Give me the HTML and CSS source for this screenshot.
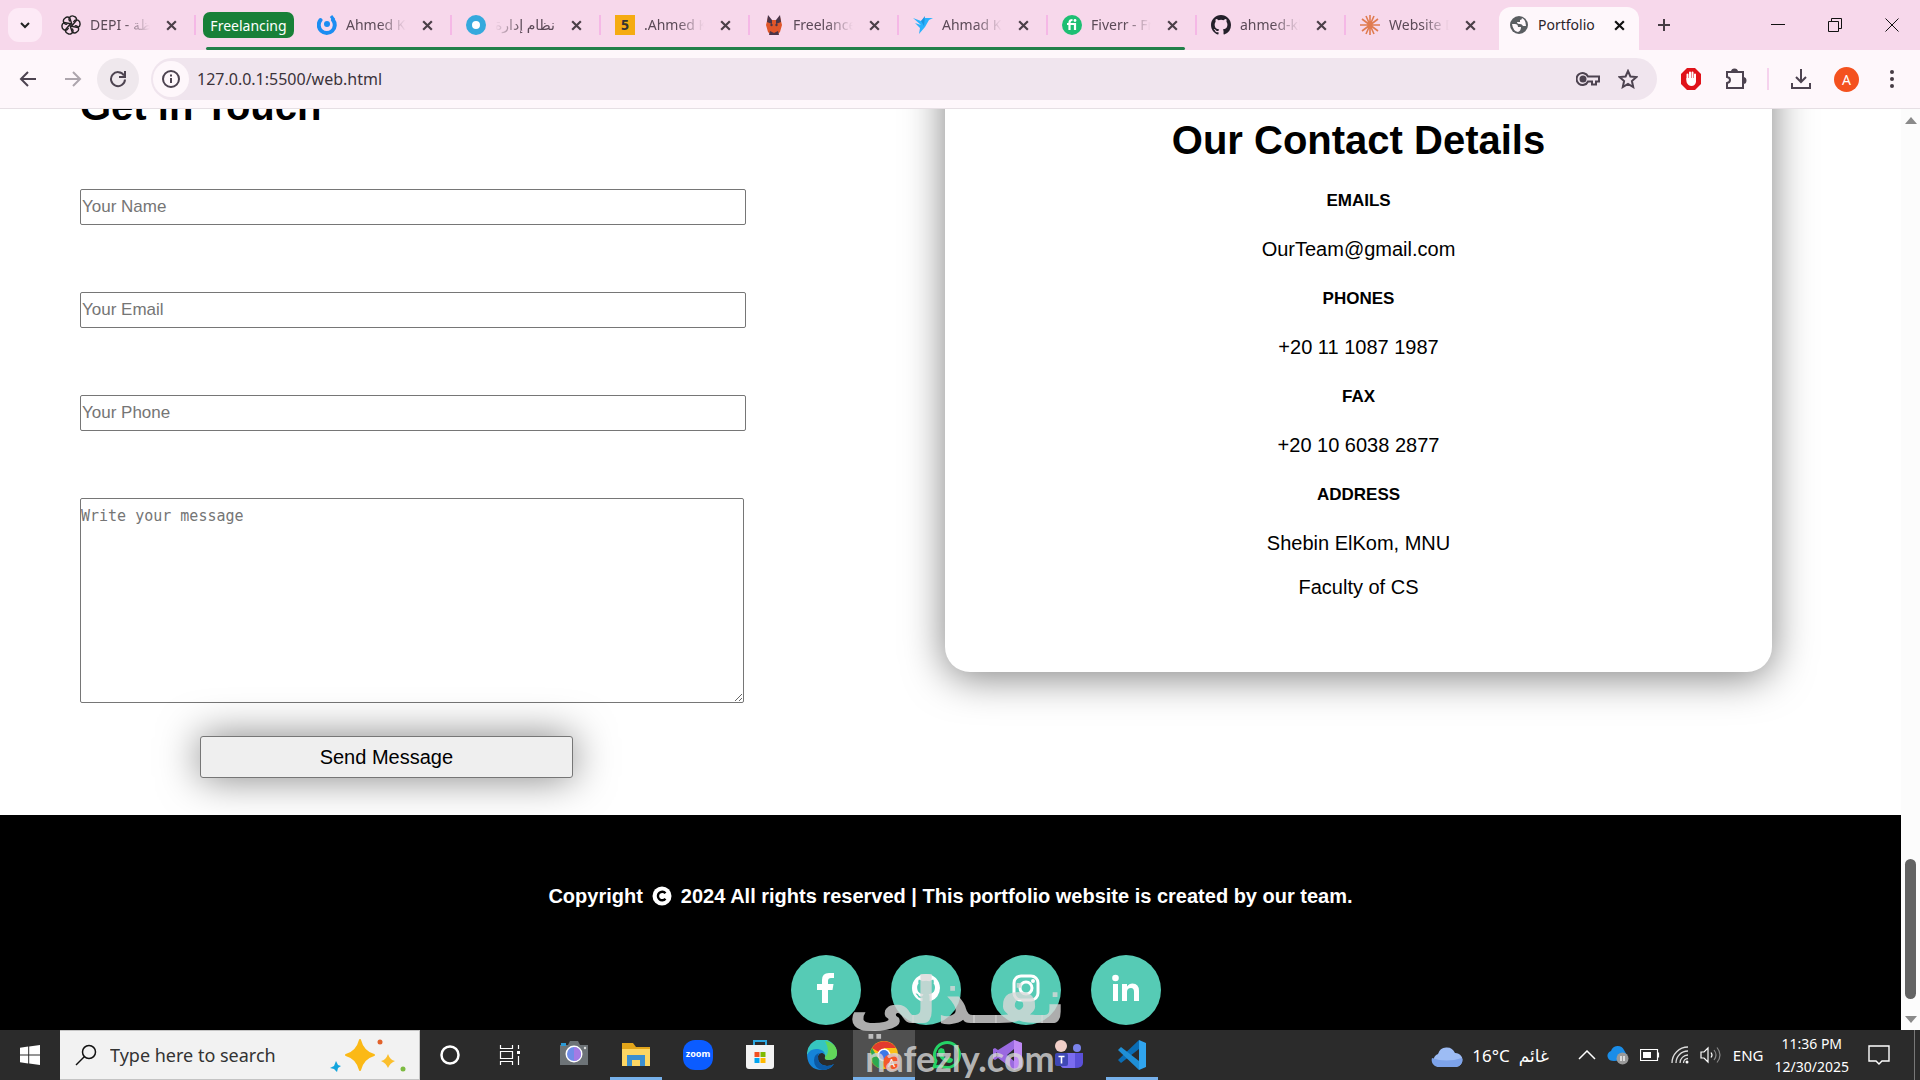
FILE: index.html
```html
<!DOCTYPE html>
<html lang="en">
<head>
<meta charset="UTF-8">
<title>Portfolio</title>
<link rel="stylesheet" href="styles.css">
</head>
<body>

<!-- tab strip -->
<div class="tabs">
	<button class="tab-search" aria-label="Search tabs"><svg width="14" height="14" viewBox="0 0 14 14"><path d="M3 5l4 4 4-4" fill="none" stroke="#222" stroke-width="2"/></svg></button>
	<div class="tab">
		<svg class="fav" viewBox="0 0 24 24"><g fill="none" stroke="#222" stroke-width="1.7"><path id="petal" d="M12 7.5V4.8A4 4 0 0 1 19 3.6a4.300 4.300 0 0 1 1 5.500L12 13.500" transform="rotate(-20 12 12)"/><use href="#petal" transform="rotate(60 12 12)"/><use href="#petal" transform="rotate(120 12 12)"/><use href="#petal" transform="rotate(180 12 12)"/><use href="#petal" transform="rotate(240 12 12)"/><use href="#petal" transform="rotate(300 12 12)"/></g></svg>
		<span class="title">DEPI - ملاحظة</span>
		<button class="close" aria-label="Close tab"><svg viewBox="0 0 12 12"><path d="M2 2l8 8M10 2l-8 8"/></svg></button>
	</div>
	<div class="group">
		<button class="chip">Freelancing</button>
		<div class="tab">
			<svg class="fav" viewBox="0 0 20 20"><path d="M3.500 5a8 8 0 1 0 12.500 0" fill="none" stroke="#1b8df2" stroke-width="4" stroke-linecap="round"/><circle cx="10" cy="9" r="3" fill="#1b8df2"/><path d="M14 1l3 4" stroke="#1b8df2" stroke-width="3"/></svg>
			<span class="title">Ahmed Khaled</span>
			<button class="close" aria-label="Close tab"><svg viewBox="0 0 12 12"><path d="M2 2l8 8M10 2l-8 8"/></svg></button>
		</div>
		<div class="tab">
			<svg class="fav" viewBox="0 0 20 20"><circle cx="10" cy="10" r="7" fill="#fff" stroke="#35a9dd" stroke-width="6"/></svg>
			<span class="title rtl" dir="rtl">نظام إدارة</span>
			<button class="close" aria-label="Close tab"><svg viewBox="0 0 12 12"><path d="M2 2l8 8M10 2l-8 8"/></svg></button>
		</div>
		<div class="tab">
			<span class="fav five">5</span>
			<span class="title">.Ahmed Khaled</span>
			<button class="close" aria-label="Close tab"><svg viewBox="0 0 12 12"><path d="M2 2l8 8M10 2l-8 8"/></svg></button>
		</div>
		<div class="tab">
			<svg class="fav" viewBox="0 0 20 20"><path d="M4 2l3 3h6l3-3 2 8-2 7-3 3H7l-3-3-2-7z" fill="#e0562a"/><path d="M4 0l4 5v4L3 7zM16 0l-4 5v4l5-2zM5 20l1-4 4 2 4-2 1 4z" fill="#4a3548"/><circle cx="7.500" cy="10" r="1.200" fill="#4a3548"/><circle cx="12.500" cy="10" r="1.200" fill="#4a3548"/></svg>
			<span class="title">Freelancer</span>
			<button class="close" aria-label="Close tab"><svg viewBox="0 0 12 12"><path d="M2 2l8 8M10 2l-8 8"/></svg></button>
		</div>
		<div class="tab">
			<svg class="fav" viewBox="0 0 20 20"><path d="M0 3l8 3 4-3 8 0-4 2-4 7-6 7 1-6-5-5 6 2z" fill="#29b2fe"/><path d="M8 6l4-5-1 10z" fill="#1b95e0"/></svg>
			<span class="title">Ahmad Khaled</span>
			<button class="close" aria-label="Close tab"><svg viewBox="0 0 12 12"><path d="M2 2l8 8M10 2l-8 8"/></svg></button>
		</div>
		<div class="tab last">
			<svg class="fav" viewBox="0 0 20 20"><circle cx="10" cy="10" r="10" fill="#1dbf73"/><path d="M7.500 15V7.500q0-2.500 3-2.500M5 9h8v6" fill="none" stroke="#fff" stroke-width="2.200"/><circle cx="13" cy="5.500" r="1.400" fill="#fff"/></svg>
			<span class="title">Fiverr - Freelance</span>
			<button class="close" aria-label="Close tab"><svg viewBox="0 0 12 12"><path d="M2 2l8 8M10 2l-8 8"/></svg></button>
		</div>
	</div>
	<div class="tab">
		<svg class="fav" viewBox="0 0 16 16"><path fill="#24202a" d="M8 0C3.580 0 0 3.580 0 8c0 3.540 2.290 6.530 5.470 7.590.4.07.55-.17.55-.38v-1.490c-2.010.37-2.530-.49-2.690-.94-.09-.23-.48-.94-.82-1.130-.28-.15-.68-.52-.01-.53.63-.01 1.080.58 1.230.82.72 1.210 1.870.87 2.330.66.07-.52.28-.87.51-1.070-1.780-.2-3.640-.89-3.640-3.950 0-.87.31-1.590.82-2.150-.08-.2-.36-1.020.08-2.120 0 0 .67-.21 2.200.82a7.600 7.600 0 0 1 4 0c1.530-1.040 2.200-.82 2.200-.82.44 1.100.16 1.920.08 2.120.51.56.82 1.270.82 2.150 0 3.070-1.870 3.750-3.650 3.950.29.25.54.73.54 1.480v2.200c0 .21.15.46.55.38A8 8 0 0 0 16 8c0-4.420-3.580-8-8-8z"/></svg>
		<span class="title">ahmed-khaled</span>
		<button class="close" aria-label="Close tab"><svg viewBox="0 0 12 12"><path d="M2 2l8 8M10 2l-8 8"/></svg></button>
	</div>
	<div class="tab last">
		<svg class="fav" viewBox="0 0 20 20"><path d="M10 0v20M0 10h20M2 4l16 12M18 4L2 16M6 1l8 18M14 1L6 19" stroke="#e07b4f" stroke-width="1.600"/></svg>
		<span class="title">Website Dev</span>
		<button class="close" aria-label="Close tab"><svg viewBox="0 0 12 12"><path d="M2 2l8 8M10 2l-8 8"/></svg></button>
	</div>
	<div class="tab active">
		<svg class="fav" viewBox="0 0 20 20"><circle cx="10" cy="10" r="9" fill="#5a5d61"/><path d="M3 9h3q3 0 3 3h3q0 4-3 5-5-1-6-8zM9 3h4q0 2-2 2v2H8q0 2 3 2 2 0 3 2h3q0-6-4-8z" fill="#fef7fb"/></svg>
		<span class="title">Portfolio</span>
		<button class="close" aria-label="Close tab"><svg viewBox="0 0 12 12"><path d="M2 2l8 8M10 2l-8 8"/></svg></button>
	</div>
	<button class="new-tab" aria-label="New tab"><svg width="14" height="14" viewBox="0 0 14 14"><path d="M7 1v12M1 7h12" stroke="#463c44" stroke-width="2"/></svg></button>
	<div class="win">
		<button aria-label="Minimize"><svg width="14" height="14" viewBox="0 0 14 14"><path d="M0 6.500h14"/></svg></button>
		<button aria-label="Restore"><svg width="14" height="14" viewBox="0 0 14 14"><path d="M.5 3.500h10v10H.5zM3.500 3V.5h10v10H11"/></svg></button>
		<button aria-label="Close"><svg width="14" height="14" viewBox="0 0 14 14"><path d="M.5.5l13 13M13.500.5l-13 13"/></svg></button>
	</div>
</div>

<!-- toolbar -->
<div class="toolbar">
	<button aria-label="Back"><svg width="18" height="18" viewBox="0 0 18 18"><path d="M17 9H3M9 2L2 9l7 7"/></svg></button>
	<button aria-label="Forward" class="off"><svg width="18" height="18" viewBox="0 0 18 18"><path d="M1 9h14M9 2l7 7-7 7"/></svg></button>
	<button aria-label="Reload" class="reload"><svg width="18" height="18" viewBox="0 0 18 18"><path d="M15 5.500A7 7 0 1 0 16 9.500M16 1v6h-6"/></svg></button>
	<div class="omnibox">
		<button class="info" aria-label="Site information"><svg width="18" height="18" viewBox="0 0 18 18"><circle cx="9" cy="9" r="8"/><path d="M9 8v5M9 4.500v2"/></svg></button>
		<input type="text" value="127.0.0.1:5500/web.html" aria-label="Address">
		<button aria-label="Passwords"><svg width="24" height="18" viewBox="0 0 24 18"><path d="M12 6.500A6 6 0 1 0 12 11.500h4v3h4v-3h3v-5z"/><circle cx="7" cy="9" r="2.500" fill="#4d4350" stroke="none"/></svg></button>
		<button aria-label="Bookmark"><svg width="20" height="20" viewBox="0 0 20 20"><path d="M10 2l2.400 5.500 6 .5-4.500 4 1.300 6-5.200-3.200L4.800 18l1.300-6L1.600 8l6-.5z"/></svg></button>
	</div>
	<button aria-label="Ad blocker"><svg width="22" height="22" viewBox="0 0 22 22"><path d="M7 0h8l6 6v10l-6 6H7l-6-6V6z" fill="#e0131a" stroke="none"/><path d="M7.500 12V6.500M10 11V4.500M12.500 11V4.500M15 12V6.500" stroke="#fff" stroke-linecap="round"/><path d="M6.500 10H16v4q-1 4-4.500 4t-5-4z" fill="#fff" stroke="none"/></svg></button>
	<button aria-label="Extensions"><svg width="22" height="22" viewBox="0 0 22 22"><path d="M2 4h5a2.500 2.500 0 0 1 5 0h6v6a2.500 2.500 0 0 1 0 5v5H2v-5q3-.5 3-3T2 9z"/><path d="M7.500 4a2 2 0 0 1 4 0zM18 10.500a2 2 0 0 1 0 4z" fill="#4d4350"/></svg></button>
	<i class="bar"></i>
	<button aria-label="Downloads"><svg width="22" height="22" viewBox="0 0 22 22"><path d="M11 1v13M6 9l5 5 5-5M2 15v5h18v-5"/></svg></button>
	<button class="avatar" aria-label="Profile">A</button>
	<button aria-label="Menu"><svg width="4" height="20" viewBox="0 0 4 20"><g fill="#463c44" stroke="none"><circle cx="2" cy="3" r="2"/><circle cx="2" cy="10" r="2"/><circle cx="2" cy="17" r="2"/></g></svg></button>
</div>

<!-- page -->
<div class="view">
	<div class="page">
		<div class="scrolled">
			<section class="contact">
				<form class="form">
					<h1>Get in Touch</h1>
					<input type="text" placeholder="Your Name" aria-label="Your Name">
					<input type="email" placeholder="Your Email" aria-label="Your Email">
					<input type="tel" placeholder="Your Phone" aria-label="Your Phone">
					<textarea placeholder="Write your message" aria-label="Write your message"></textarea>
					<button type="button">Send Message</button>
				</form>
				<div class="card">
					<h1>Our Contact Details</h1>
					<h5>EMAILS</h5>
					<p>OurTeam@gmail.com</p>
					<h5>PHONES</h5>
					<p>+20 11 1087 1987</p>
					<h5>FAX</h5>
					<p>+20 10 6038 2877</p>
					<h5>ADDRESS</h5>
					<p>Shebin ElKom, MNU</p>
					<p>Faculty of CS</p>
				</div>
			</section>
			<footer>
				<p>Copyright <svg width="20" height="20" viewBox="0 0 20 20"><circle cx="10" cy="10" r="9.500" fill="#fff"/><path d="M13.500 7.200a4.300 4.300 0 1 0 0 5.600" fill="none" stroke="#000" stroke-width="2.400"/></svg> 2024 All rights reserved | This portfolio website is created by our team.</p>
				<ul>
					<li><a href="#" aria-label="Facebook"><svg width="20" height="32" viewBox="0 0 20 32"><path fill="#fff" d="M6 31V18H1v-6h5V8q0-7 7-7h5v5h-3q-3 0-3 3v3h5.500l-1 6H12v13z"/></svg></a></li>
					<li><a href="#" aria-label="GitHub"><svg width="28" height="28" viewBox="0 0 16 16"><path fill="#fff" d="M8 0C3.580 0 0 3.580 0 8c0 3.540 2.290 6.530 5.470 7.590.4.07.55-.17.55-.38v-1.490c-2.010.37-2.530-.49-2.690-.94-.09-.23-.48-.94-.82-1.130-.28-.15-.68-.52-.01-.53.63-.01 1.080.58 1.230.82.72 1.210 1.870.87 2.330.66.07-.52.28-.87.51-1.070-1.780-.2-3.640-.89-3.640-3.950 0-.87.31-1.590.82-2.150-.08-.2-.36-1.020.08-2.120 0 0 .67-.21 2.200.82a7.600 7.600 0 0 1 4 0c1.530-1.040 2.200-.82 2.200-.82.44 1.100.16 1.920.08 2.120.51.56.82 1.270.82 2.150 0 3.070-1.870 3.750-3.650 3.950.29.25.54.73.54 1.480v2.200c0 .21.15.46.55.38A8 8 0 0 0 16 8c0-4.420-3.580-8-8-8z"/></svg></a></li>
					<li><a href="#" aria-label="Instagram"><svg width="28" height="28" viewBox="0 0 28 28"><rect x="2" y="2" width="24" height="24" rx="7" fill="none" stroke="#fff" stroke-width="3"/><circle cx="14" cy="14" r="6" fill="none" stroke="#fff" stroke-width="3"/><circle cx="21" cy="7" r="2" fill="#fff"/></svg></a></li>
					<li><a href="#" aria-label="LinkedIn"><svg width="28" height="28" viewBox="0 0 28 28"><path fill="#fff" d="M1 10h5v17H1zM10 10h5v2.500q2-3 5.500-3 6.500 0 6.500 7.500v10h-5v-9q0-4-3-4-4 0-4 4v9h-5z"/><circle cx="3.500" cy="4" r="3.300" fill="#fff"/></svg></a></li>
				</ul>
			</footer>
		</div>
	</div>
	<div class="scrollbar"><i class="up"></i><i class="thumb"></i><i class="down"></i></div>
</div>

<!-- taskbar -->
<div class="taskbar">
	<button class="start" aria-label="Start"><svg width="20" height="20" viewBox="0 0 20 20"><path fill="#fff" d="M0 2.800L8.200 1.600v7.900H0zM9.200 1.500L20 0v9.500H9.200zM0 10.500h8.200v7.900L0 17.200zM9.200 10.500H20V20L9.200 18.500z"/></svg></button>
	<div class="search">
		<svg width="22" height="22" viewBox="0 0 22 22"><circle cx="14" cy="8" r="6.500" fill="none" stroke="#111" stroke-width="1.500"/><path d="M9.500 12.500L1 21" stroke="#111" stroke-width="1.500"/></svg>
		<input type="text" placeholder="Type here to search" aria-label="Search">
		<svg width="78" height="34" viewBox="0 0 78 34"><path d="M30 2q3 12 14 15-11 3-14 15-3-12-14-15 11-3 14-15z" fill="#fbb916" stroke="#fbb916" stroke-width="2" stroke-linejoin="round"/><path d="M58 16q2 6 7 7-5 2-7 7-2-5-7-7 5-1 7-7z" fill="#fbbf2d"/><path d="M6 23l2 4 3 1-3 2-1 4-3-3-4-1 4-2z" fill="#12a5dd"/><circle cx="50" cy="4" r="2.500" fill="#e2622b"/><circle cx="73" cy="31" r="2.500" fill="#7dbb42"/></svg>
	</div>
	<button class="sys" aria-label="Cortana"><svg width="22" height="22" viewBox="0 0 22 22"><circle cx="11" cy="11" r="8.500" fill="none" stroke="#fff" stroke-width="2.500"/></svg></button>
	<button class="sys" aria-label="Task view"><svg width="22" height="20" viewBox="0 0 22 20"><path d="M1.500 0v3.500h12V0M1.500 6.500h12v7h-12zM1.500 20v-3.500h12V20M19.500 0v4M19.500 11v9" fill="none" stroke="#fff" stroke-width="1.200"/><path d="M18 6h3v3h-3z" fill="#fff"/></svg></button>
	<div class="apps">
		<button aria-label="Camera"><svg width="30" height="30" viewBox="0 0 30 30"><path d="M1 5h8l2-4h8l2 4h8v20H1z" fill="#6d7377"/><path d="M2 3h5v3H2z" fill="#2b9ad6"/><circle cx="15" cy="14" r="8.500" fill="#fff"/><circle cx="15" cy="14" r="7" fill="#6f8de8"/><path d="M15 7a7 7 0 0 1 0 14z" fill="#a47be4"/><circle cx="26" cy="8" r="1.200" fill="#ddd"/></svg></button>
		<button aria-label="File Explorer" class="open"><svg width="30" height="28" viewBox="0 0 30 28"><path d="M1 2h11l3 4h14v19H1z" fill="#e2a51a"/><path d="M1 8h28v17H1z" fill="#fdd663"/><path d="M6 25V14h18v11h-5v-6h-8v6z" fill="#3c8fd0"/></svg></button>
		<button aria-label="Zoom"><span class="zoom">zoom</span></button>
		<button aria-label="Store"><svg width="30" height="30" viewBox="0 0 30 30"><path d="M9 7V1h12v6" fill="none" stroke="#2da7e0" stroke-width="2"/><path d="M1 5h28v21q0 3-3 3H4q-3 0-3-3z" fill="#f3f3f3"/><path d="M9.500 12h5v5h-5z" fill="#f25022"/><path d="M15.500 12h5v5h-5z" fill="#7fba00"/><path d="M9.500 18h5v5h-5z" fill="#00a4ef"/><path d="M15.500 18h5v5h-5z" fill="#ffb900"/></svg></button>
		<button aria-label="Edge"><svg width="30" height="30" viewBox="0 0 30 30"><path d="M0 15A15 15 0 0 1 30 13q0 7-8 7-5 0-4-3 1-2-2-4-8-3-16 2z" fill="#36c6c0"/><path d="M18 1q12 2 12 12 0 7-8 7-5 0-4-3 6-5 0-16z" fill="#62d65a"/><path d="M0 15q3-7 11-6 6 1 7 5-5-3-7 2-1 9 9 10 4 0 7-2-4 6-12 6Q1 30 0 15z" fill="#1584d8"/><path d="M11 16q-1 9 9 10 4 0 7-2-4 6-12 6Q7 28 7 20q0-6 6-7-2 1-2 3z" fill="#0c59a4"/></svg></button>
		<button aria-label="Chrome" class="open current"><svg width="30" height="30" viewBox="0 0 30 30"><circle cx="15" cy="15" r="14" fill="#fbc116"/><path d="M15 15L3 8A14 14 0 0 1 27 8H15z" fill="#e33b2e"/><path d="M15 15l-1 14A14 14 0 0 1 3 8l6 10z" fill="#2da94f"/><circle cx="15" cy="15" r="6.500" fill="#fff"/><circle cx="15" cy="15" r="5" fill="#3b78e7"/></svg><span class="badge">A</span></button>
		<button aria-label="WhatsApp"><svg width="30" height="30" viewBox="0 0 30 30"><path d="M3 27l2-6A12.500 12.500 0 1 1 10 26z" fill="#2b2b2b" stroke="#25d366" stroke-width="3"/><path d="M10 8l3 1 1 4-2 2q1 3 4 4l2-2 4 2q0 4-4 4-10-2-11-11 0-3 3-4z" fill="#25d366"/></svg></button>
		<button aria-label="Visual Studio"><svg width="30" height="30" viewBox="0 0 30 30"><path d="M21 0l8 3v24l-8 3L5 18l-3 2-2-1V9l2-1 3 2z" fill="#9a6ae0"/><path d="M21 0l8 3v24l-8 3z" fill="#c08af5"/><path d="M21 9v12l-7-6zM3 12v5l3-2z" fill="#2b2b2b"/></svg></button>
		<button aria-label="Teams"><svg width="30" height="30" viewBox="0 0 30 30"><circle cx="22" cy="8" r="4" fill="#7b83eb"/><path d="M15 13h13v10q0 5-8 5z" fill="#5b50d8"/><path d="M5 13h15v15H9q-4 0-4-6z" fill="#7b6cf0"/><rect y="13" width="13" height="13" rx="2" fill="#4048b5"/><path d="M3.500 16.500h6M6.500 16.500v7" stroke="#fff" stroke-width="1.600"/><circle cx="6" cy="6" r="6" fill="#f1cfc8"/></svg></button>
		<button aria-label="VS Code" class="open"><svg width="30" height="30" viewBox="0 0 30 30"><path d="M22 0v9L4 23l-3-3z" fill="#0a6db5"/><path d="M22 30v-9L4 7l-3 3z" fill="#1f8fd6"/><path d="M22 0l7 3v24l-7 3z" fill="#30a4ee"/></svg></button>
	</div>
	<div class="tray">
		<div class="weather">
			<svg width="32" height="24" viewBox="0 0 32 24"><path d="M7 24a7 7 0 0 1 0-13 9 9 0 0 1 17-1 7 7 0 0 1 1 14z" fill="#9dbcf4"/><path d="M7 24a7 7 0 0 1-6-9q14 5 30 0a7 7 0 0 1-6 9z" fill="#7da3ea"/></svg>
			<span>16°C</span><span dir="rtl">غائم</span>
		</div>
		<svg class="more" width="18" height="10" viewBox="0 0 18 10"><path d="M1 9l8-8 8 8" fill="none" stroke="#fff" stroke-width="1.500"/></svg>
		<svg width="22" height="22" viewBox="0 0 22 22"><path d="M1 14a5 5 0 0 1 3-7 7 7 0 0 1 13-1q3 4 3 8-8 3-13 3-5 0-6-3z" fill="#1a8de8"/><circle cx="15.500" cy="14.500" r="6" fill="#9a9a9a"/><path d="M14 12v5M17 12v5" stroke="#fff" stroke-width="1.300"/></svg>
		<svg width="20" height="12" viewBox="0 0 20 12"><path d="M.5.5h17v11H.5zM18.500 3.500v5" fill="none" stroke="#fff" stroke-width="1.200"/><path d="M3 3h8v6H3z" fill="#fff"/></svg>
		<svg width="18" height="18" viewBox="0 0 18 18"><path d="M1 17A16 16 0 0 1 17 1M5 17A12 12 0 0 1 17 5M9 17a8 8 0 0 1 8-8M12.500 17a4.500 4.500 0 0 1 4.500-4.500" fill="none" stroke="#ddd" stroke-width="1.300"/><circle cx="16" cy="16" r="1.500" fill="#fff"/></svg>
		<svg width="22" height="18" viewBox="0 0 22 18"><path d="M1 6h3l4-4v14l-4-4H1zM11 6.500q2 2.500 0 5" fill="none" stroke="#fff" stroke-width="1.200"/><path d="M14 4q4 5 0 10M17 1.500q6 7.500 0 15" fill="none" stroke="#888" stroke-width="1.200"/></svg>
		<span class="lang">ENG</span>
		<div class="clock">11:36 PM<br>12/30/2025</div>
		<svg width="22" height="22" viewBox="0 0 22 22"><path d="M1 2h20v15h-7l-3 3-3-3H1z" fill="none" stroke="#fff" stroke-width="1.400"/></svg>
	</div>
	<i class="desktop"></i>
</div>

<div class="watermark"><div class="ar" dir="rtl">نفـذلي</div><div class="en">nafezly.com</div></div>

</body>
</html>
```
FILE: styles.css
```css
* { box-sizing: border-box; }
body { margin: 0; height: 100vh; display: flex; flex-direction: column; overflow: hidden; background: #fff; font-family: "Liberation Sans", Arial, sans-serif; }
button { padding: 0; border: 0; background: none; display: flex; align-items: center; justify-content: center; flex: none; }
svg { flex: none; display: block; }
input { min-width: 0; }

/* tab strip */
.tabs { display: flex; height: 50px; flex: none; background: #f7d8eb; padding-left: 8px; font: 15px "Noto Sans", "DejaVu Sans", sans-serif; color: #5b4a57; }
.tab-search { width: 34px; height: 34px; margin: 8px 4px 0 0; border-radius: 11px; background: #fdeaf6; }
.tab { position: relative; display: flex; align-items: center; width: 149px; height: 50px; padding-left: 15px; flex: none; }
.tab::after { content: ""; position: absolute; right: -1px; top: 15px; width: 2px; height: 20px; background: #f5b8e6; }
.tab.last::after, .tab.active::after { display: none; }
.group .tab.last::after { display: block; }
.fav { width: 20px; height: 20px; flex: none; }
.five { background: #f5ab12; color: #333; font-size: 14px; font-weight: bold; line-height: 20px; text-align: center; }
.title { width: 60px; margin-left: 9px; overflow: hidden; white-space: nowrap; font-size: 14px; line-height: 24px; -webkit-mask-image: linear-gradient(to right, #000 55%, transparent); mask-image: linear-gradient(to right, #000 55%, transparent); }
.title.rtl { -webkit-mask-image: linear-gradient(to left, #000 55%, transparent); mask-image: linear-gradient(to left, #000 55%, transparent); }
.close { width: 20px; height: 20px; margin-left: 11px; }
.close svg { width: 13px; height: 13px; }
.close path { stroke: #4b3f48; stroke-width: 2; }
.group { display: flex; position: relative; }
.group::after { content: ""; position: absolute; left: 11px; right: 11px; bottom: 0; height: 3px; border-radius: 2px; background: #218049; }
.chip { width: 91px; height: 26px; margin: 12px 8px 0; border-radius: 7px; background: #188038; color: #fff; font: 14px "Noto Sans", sans-serif; }
.tab.active { color: #2b2329; }
.tab.active::before { content: ""; position: absolute; left: 5px; right: 4px; top: 7px; bottom: 0; border-radius: 12px 12px 0 0; background: #fef7fb; }
.tab.active > * { position: relative; }
.tab.active .title { -webkit-mask-image: none; mask-image: none; }
.tab.active .close path { stroke: #111; }
.new-tab { width: 42px; }
.win { display: flex; margin-left: auto; }
.win button { width: 57px; }
.win path { fill: none; stroke: #111; }

/* toolbar */
.toolbar { display: flex; align-items: center; height: 59px; flex: none; padding: 0 6px 0 5px; background: #fef7fb; border-bottom: 1px solid #e6dfe4; }
.toolbar button { width: 45px; height: 42px; }
.toolbar path, .toolbar circle { fill: none; stroke: #4d4350; stroke-width: 2; }
.toolbar [fill="#4d4350"] { fill: #4d4350; }
.toolbar [fill="#fff"] { fill: #fff; stroke: none; }
.toolbar [stroke="#fff"] { stroke: #fff; }
.toolbar [fill="#e0131a"] { fill: #e0131a; stroke: none; }
.toolbar [fill="#463c44"] circle { fill: #463c44; stroke: none; }
.toolbar .off { opacity: .45; }
.toolbar .reload { width: 42px; border-radius: 50%; background: #efe8ed; margin-left: 2px; }
.omnibox { flex: 1; display: flex; align-items: center; height: 42px; margin: 0 11px 0 12px; padding: 0 9px 0 2px; border-radius: 21px; background: #f0e5ee; }
.omnibox input { flex: 1; border: 0; padding: 0 0 0 8px; background: none; color: #3b333a; font: 16px "Noto Sans", sans-serif; }
.toolbar .omnibox button { width: 40px; }
.toolbar .omnibox .info { width: 36px; height: 36px; border-radius: 50%; background: #fef7fb; }
.bar { width: 2px; height: 22px; margin: 0 9px; background: #f6d3ee; }
.toolbar .avatar { width: 25px; height: 25px; margin: 0 10px 0 11px; border-radius: 50%; background: #f4511e; color: #fff; font: 14px "Noto Sans", sans-serif; }

/* page */
.view { flex: 1; display: flex; min-height: 0; }
.page { flex: 1; overflow: hidden; }
.scrolled { margin-top: -60px; }
.contact { display: grid; grid-template-columns: 666fr 827fr; column-gap: 199px; align-items: start; padding: 0 129px 37px 80px; }
h1 { margin: 0; font-size: 40px; line-height: 46px; }
.form { display: flex; flex-direction: column; padding-top: 34px; }
.form h1 { margin-bottom: 60px; }
.form input { height: 36px; margin-bottom: 67px; padding: 0 1px; border: 1px solid #767676; border-radius: 2px; font: 17px "Liberation Sans", Arial, sans-serif; }
.form textarea { width: 664px; max-width: 100%; height: 205px; padding: 8px 0; border: 1px solid #767676; border-radius: 2px; font: 15px "DejaVu Sans Mono", monospace; }
::placeholder { color: #757575; }
.form button { width: 56%; height: 42px; margin: 33px 0 0 18%; border: 1px solid #767676; border-radius: 3px; background: #efefef; box-shadow: 0 0 40px rgba(0,0,0,.5); color: #000; font: 20px "Liberation Sans", Arial, sans-serif; }
.card { padding: 68px 20px 73px; border-radius: 25px; box-shadow: 0 5px 40px rgba(0,0,0,.5); text-align: center; }
.card h1 { margin-bottom: 28px; }
.card h5 { margin: 28px 0 26px; font-size: 17px; line-height: 20px; }
.card p { margin: 0; font-size: 20px; line-height: 24px; }
.card p + p { margin-top: 20px; }
footer { padding: 69px 0 60px; background: #000; color: #fff; }
footer p { display: flex; align-items: center; justify-content: center; gap: 9px; margin: 0; font-size: 20px; font-weight: bold; line-height: 24px; }
footer ul { display: flex; justify-content: center; gap: 30px; margin: 47px 0 0; padding: 0 0 0 50px; list-style: none; }
footer a { display: flex; align-items: center; justify-content: center; width: 70px; height: 70px; padding-bottom: 4px; border-radius: 50%; background: #56cbb5; }
.scrollbar { width: 19px; display: flex; flex-direction: column; align-items: center; background: #fcfcfc; padding: 8px 0 7px; }
.up, .down { border: 6px solid transparent; }
.up { border-top: 0; border-bottom: 7px solid #8a8a8a; }
.down { border-bottom: 0; border-top: 7px solid #8a8a8a; }
.thumb { width: 11px; height: 140px; margin: auto 0 17px; border-radius: 6px; background: #636363; }

/* taskbar */
.taskbar { display: flex; height: 50px; flex: none; background: #2b2b2b; color: #fff; font: 18px "Noto Sans", "DejaVu Sans", sans-serif; }
.start, .sys { width: 60px; }
.search { display: flex; align-items: center; width: 360px; padding: 0 11px 0 15px; background: #f2f2f2; border: 1px solid #c4c4c4; border-left: 0; }
.search input { flex: 1; padding: 0 0 0 13px; border: 0; background: none; font: 18px "Noto Sans", sans-serif; }
.search ::placeholder { color: #333; }
.apps { display: flex; margin-left: 3px; }
.apps button { position: relative; width: 62px; }
.apps .current { background: #505050; }
.open::after { content: ""; position: absolute; left: 5px; right: 5px; bottom: 0; height: 3px; background: #76b0ea; }
.current::after { left: 0; right: 0; }
.zoom { width: 30px; height: 30px; border-radius: 12px; background: #0b5cff; color: #fff; font: bold 9px/28px "Noto Sans", sans-serif; text-align: center; }
.badge { position: absolute; right: 15px; bottom: 9px; width: 17px; height: 17px; border-radius: 50%; background: #f4592a; color: #fff; font: 11px/17px "Noto Sans", sans-serif; text-align: center; }
.tray { display: flex; align-items: center; gap: 11px; margin-left: auto; padding-right: 24px; }
.weather { display: flex; align-items: center; gap: 9px; margin-right: 18px; font-size: 17px; }
.lang { font-size: 15px; }
.clock { font-size: 14px; line-height: 23px; text-align: center; margin-right: 8px; }
.desktop { width: 6px; border-left: 1px solid #777; }

.watermark { position: absolute; left: 50%; bottom: 0; width: 212px; margin-left: -106px; text-align: center; color: rgba(216,216,216,.8); pointer-events: none; }
.ar { font: bold 64px/70px "DejaVu Sans", sans-serif; white-space: nowrap; }
.en { font: bold 36px/44px Lato, sans-serif; }
```
